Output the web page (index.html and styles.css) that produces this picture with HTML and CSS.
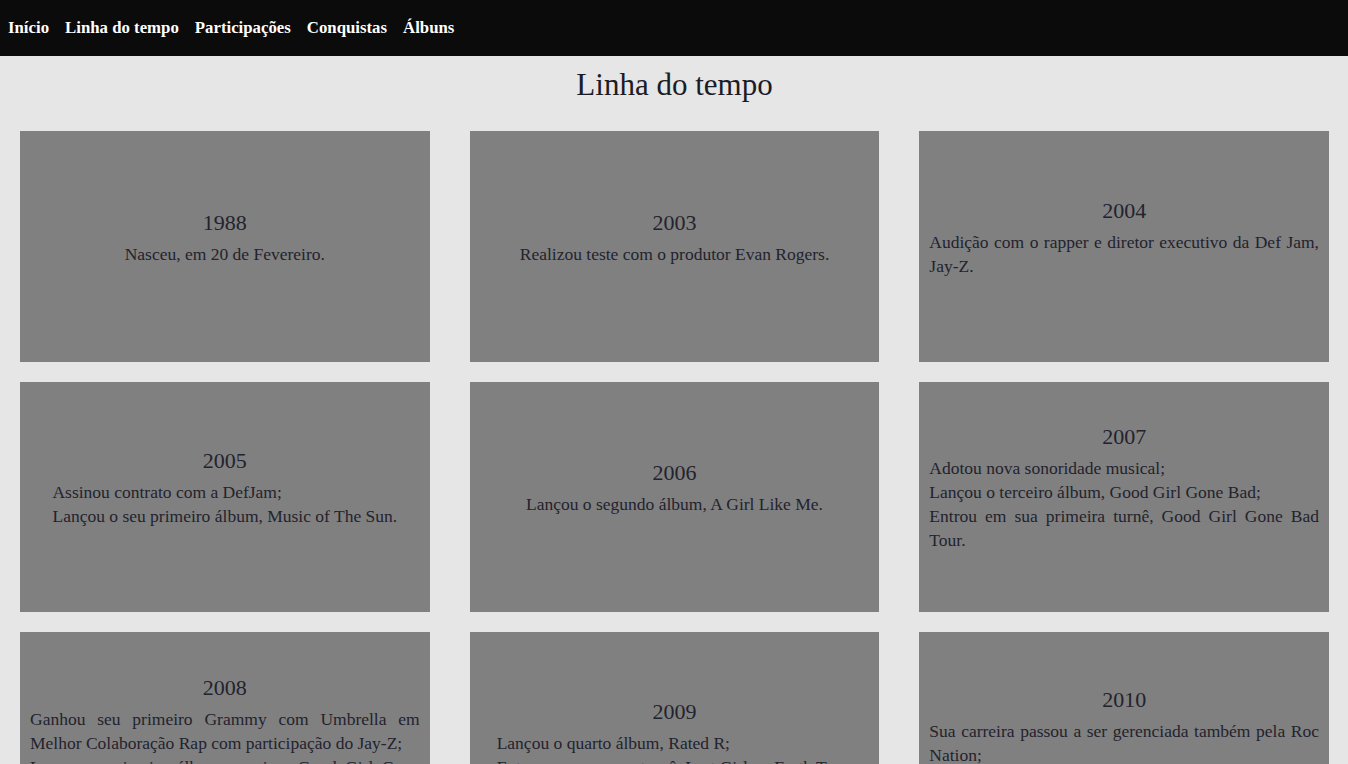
FILE: index.html
```html
<!DOCTYPE html>
<html lang="pt-BR">
<head>
<meta charset="utf-8">
<title>Linha do tempo</title>
<link rel="stylesheet" href="styles.css">
</head>
<body>
<nav class="topbar">
  <a href="#" class="nav-link">Início</a>
  <a href="#" class="nav-link">Linha do tempo</a>
  <a href="#" class="nav-link">Participações</a>
  <a href="#" class="nav-link">Conquistas</a>
  <a href="#" class="nav-link">Álbuns</a>
</nav>
<main class="page">
  <h1 class="page-title">Linha do tempo</h1>
  <section class="timeline">
    <article class="card">
      <h3 class="year">1988</h3>
      <p class="text">Nasceu, em 20 de Fevereiro.</p>
    </article>
    <article class="card">
      <h3 class="year">2003</h3>
      <p class="text">Realizou teste com o produtor Evan Rogers.</p>
    </article>
    <article class="card">
      <h3 class="year">2004</h3>
      <p class="text">Audição com o rapper e diretor executivo da Def Jam, Jay-Z.</p>
    </article>
    <article class="card">
      <h3 class="year">2005</h3>
      <p class="text">Assinou contrato com a DefJam;<br>Lançou o seu primeiro álbum, Music of The Sun.</p>
    </article>
    <article class="card">
      <h3 class="year">2006</h3>
      <p class="text">Lançou o segundo álbum, A Girl Like Me.</p>
    </article>
    <article class="card">
      <h3 class="year">2007</h3>
      <p class="text">Adotou nova sonoridade musical;<br>Lançou o terceiro álbum, Good Girl Gone Bad;<br>Entrou em sua primeira turnê, Good Girl Gone Bad Tour.</p>
    </article>
    <article class="card">
      <h3 class="year">2008</h3>
      <p class="text">Ganhou seu primeiro Grammy com Umbrella em Melhor Colaboração Rap com participação do Jay-Z;<br>Lançou o primeiro álbum ao vivo, Good Girl Gone Bad Live.</p>
    </article>
    <article class="card">
      <h3 class="year">2009</h3>
      <p class="text">Lançou o quarto álbum, Rated R;<br>Entrou em sua nova turnê, Last Girl on Earth Tour.</p>
    </article>
    <article class="card">
      <h3 class="year">2010</h3>
      <p class="text">Sua carreira passou a ser gerenciada também pela Roc Nation;<br>Lançou o quinto álbum, Loud.</p>
    </article>
  </section>
</main>
</body>
</html>
```
FILE: styles.css
```css
* {
  box-sizing: border-box;
}

body {
  margin: 0;
  background: #e6e6e6;
  font-family: "Liberation Serif", "Times New Roman", serif;
  color: #23232e;
}

.topbar {
  height: 56px;
  background: #0b0b0b;
  display: flex;
  align-items: center;
  gap: 16px;
  padding: 0 8px;
}

.nav-link {
  color: #ffffff;
  text-decoration: none;
  font-size: 16.8px;
  font-weight: bold;
}

.page {
  padding: 0 19px 0 20px;
}

.page-title {
  margin: 0;
  padding: 11px 0 28px;
  text-align: center;
  font-size: 31px;
  line-height: 36px;
  font-weight: normal;
  color: #1c1c24;
}

.timeline {
  display: grid;
  grid-template-columns: repeat(3, 1fr);
  column-gap: 40px;
  row-gap: 20px;
}

.card {
  height: 230.6px;
  background: #808080;
  padding: 10px;
  display: flex;
  flex-direction: column;
  justify-content: center;
  align-items: center;
}

.year {
  margin: 0;
  font-size: 22px;
  line-height: 25px;
  font-weight: normal;
  color: #23232e;
}

.text {
  margin: 7px 0 17px;
  font-size: 17.5px;
  line-height: 24px;
  text-align: justify;
  color: #23232e;
}
```
